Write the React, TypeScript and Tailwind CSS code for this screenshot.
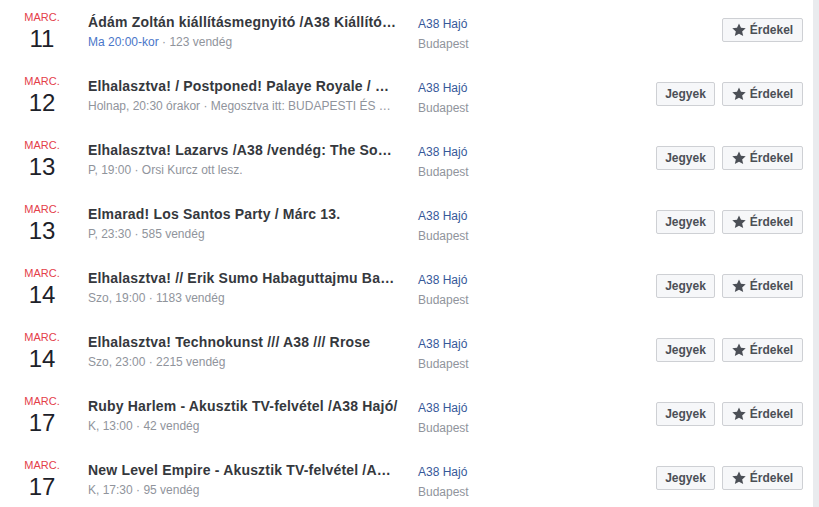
import React from "react"

type Event = {
    day: string
    title: string
    when: string
    whenLink?: boolean
    extra: string
    tickets: boolean
}

const events: Event[] = [
    { day: "11", title: "Ádám Zoltán kiállításmegnyitó /A38 Kiállítótér/", when: "Ma 20:00-kor", whenLink: true, extra: "123 vendég", tickets: false },
    { day: "12", title: "Elhalasztva! / Postponed! Palaye Royale / Mindset", when: "Holnap, 20:30 órakor", extra: "Megosztva itt: BUDAPESTI ÉS VIDÉKI KONCERTEK", tickets: true },
    { day: "13", title: "Elhalasztva! Lazarvs /A38 /vendég: The Sonic Dawn", when: "P, 19:00", extra: "Orsi Kurcz ott lesz.", tickets: true },
    { day: "13", title: "Elmarad! Los Santos Party / Márc 13.", when: "P, 23:30", extra: "585 vendég", tickets: true },
    { day: "14", title: "Elhalasztva! // Erik Sumo Habaguttajmu Band /A38/", when: "Szo, 19:00", extra: "1183 vendég", tickets: true },
    { day: "14", title: "Elhalasztva! Technokunst /// A38 /// Rrose", when: "Szo, 23:00", extra: "2215 vendég", tickets: true },
    { day: "17", title: "Ruby Harlem - Akusztik TV-felvétel /A38 Hajó/", when: "K, 13:00", extra: "42 vendég", tickets: true },
    { day: "17", title: "New Level Empire - Akusztik TV-felvétel /A38 Hajó/", when: "K, 17:30", extra: "95 vendég", tickets: true },
]

function StarIcon() {
    return (
        <svg width="14" height="14" viewBox="0 0 24 24" className="shrink-0">
            <path d="M12 .8l3.4 7.4 8.1.8-6.1 5.4 1.8 8L12 18.3l-7.2 4.1 1.8-8L.5 9l8.1-.8z" fill="#4b4f56" />
        </svg>
    )
}

export default function App() {
    return (
        <div className="flex min-h-screen font-['Liberation_Sans',Arial,sans-serif]">
            <div className="w-[813px] bg-white pl-[20px] pr-[10px]">
                {events.map((ev, i) => (
                    <div key={i} className="flex h-16 items-start">
                        {/* date */}
                        <div className="w-[44px] pt-[11px] text-center">
                            <div className="text-[11px] leading-[12px] text-[#e4404a]">MARC.</div>
                            <div className="mt-[4px] text-[24px] leading-[24px] text-[#1d2129]">{ev.day}</div>
                        </div>

                        {/* title + meta */}
                        <div className="ml-[24px] w-[310px] pt-[12px]">
                            <div className="truncate text-[14px] font-bold leading-[20px] tracking-[0.18px] text-[#35383d]">{ev.title}</div>
                            <div className="truncate text-[12px] leading-[20px] text-[#90949c]">
                                <span className={ev.whenLink ? "text-[#4a76c9]" : ""}>{ev.when}</span>
                                {" · "}
                                {ev.extra}
                            </div>
                        </div>

                        {/* place */}
                        <div className="ml-[20px] pt-[14px] text-[12px] leading-[20px]">
                            <div className="text-[#365899]">A38 Hajó</div>
                            <div className="text-[#90949c]">Budapest</div>
                        </div>

                        {/* actions */}
                        <div className="ml-auto flex gap-[7px] pt-[18px]">
                            {ev.tickets && (
                                <button className="flex h-[24px] w-[59px] items-center justify-center rounded-[2px] border border-[#ced0d4] bg-[#f6f7f9] text-[12px] font-bold text-[#4b4f56]">
                                    Jegyek
                                </button>
                            )}
                            <button className="flex h-[24px] w-[81px] items-center justify-center gap-[4px] rounded-[2px] border border-[#ced0d4] bg-[#f6f7f9] text-[12px] font-bold text-[#4b4f56]">
                                <StarIcon />
                                Érdekel
                            </button>
                        </div>
                    </div>
                ))}
            </div>
            <div className="flex-1 bg-[#e9ebee]" />
        </div>
    )
}
